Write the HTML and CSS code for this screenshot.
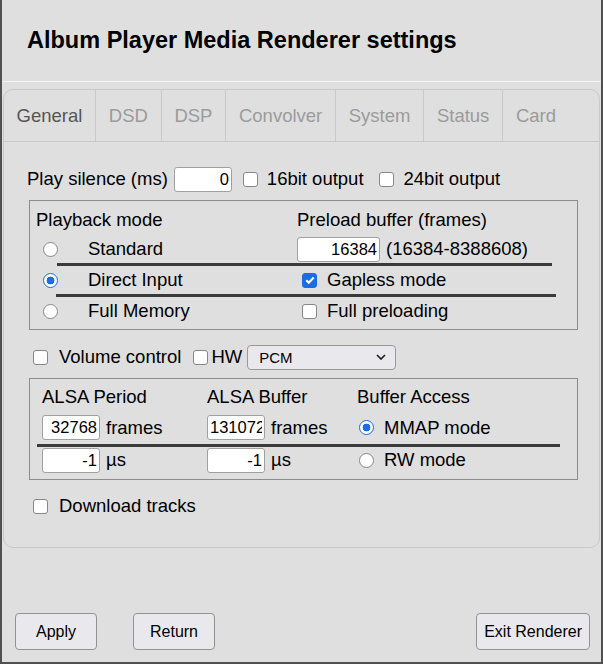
FILE: index.html
```html
<!DOCTYPE html>
<html lang="en">
<head>
    <meta charset="UTF-8">
    <meta name="viewport" content="width=device-width, initial-scale=1.0">
    <title>Album Player Media Renderer settings</title>
    <link rel="stylesheet" href="styles.css">
</head>
<body>

<div class="window">
    <header class="title-bar">
        <h1>Album Player Media Renderer settings</h1>
    </header>

    <div class="panel">
        <ul class="tabs">
            <li class="tab active">General</li>
            <li class="tab">DSD</li>
            <li class="tab">DSP</li>
            <li class="tab">Convolver</li>
            <li class="tab">System</li>
            <li class="tab">Status</li>
            <li class="tab">Card</li>
        </ul>

        <div class="tab-body">
            <div class="row silence-row">
                <span>Play silence (ms)</span>
                <input class="num silence" type="text" value="0">
                <label class="opt bit16"><input class="check" type="checkbox">16bit output</label>
                <label class="opt bit24"><input class="check" type="checkbox">24bit output</label>
            </div>

            <div class="box playback">
                <div class="cell span2">Playback mode</div>
                <div class="cell">Preload buffer (frames)</div>

                <div class="cell"><input class="radio" type="radio" name="mode"></div>
                <div class="cell">Standard</div>
                <div class="cell unit"><input class="num preload" type="text" value="16384"><span>(16384-8388608)</span></div>

                <div class="rule rule-a"></div>

                <div class="cell"><input class="radio" type="radio" name="mode" checked></div>
                <div class="cell">Direct Input</div>
                <label class="cell opt"><input class="check" type="checkbox" checked>Gapless mode</label>

                <div class="rule rule-b"></div>

                <div class="cell"><input class="radio" type="radio" name="mode"></div>
                <div class="cell">Full Memory</div>
                <label class="cell opt"><input class="check" type="checkbox">Full preloading</label>
            </div>

            <div class="row volume">
                <label class="opt"><input class="check" type="checkbox">Volume control</label>
                <label class="opt hw"><input class="check" type="checkbox">HW</label>
                <select class="select">
                    <option>PCM</option>
                    <option>Master</option>
                </select>
            </div>

            <div class="box alsa">
                <div class="cell">ALSA Period</div>
                <div class="cell">ALSA Buffer</div>
                <div class="cell">Buffer Access</div>

                <div class="cell unit"><input class="num" type="text" value="32768"><span>frames</span></div>
                <div class="cell unit"><input class="num" type="text" value="131072"><span>frames</span></div>
                <label class="cell opt access"><input class="radio" type="radio" name="access" checked>MMAP mode</label>

                <div class="rule rule-c"></div>

                <div class="cell unit"><input class="num" type="text" value="-1"><span>µs</span></div>
                <div class="cell unit"><input class="num" type="text" value="-1"><span>µs</span></div>
                <label class="cell opt access"><input class="radio" type="radio" name="access">RW mode</label>
            </div>

            <div class="row download">
                <label class="opt"><input class="check" type="checkbox">Download tracks</label>
            </div>
        </div>
    </div>

    <div class="actions">
        <button class="btn">Apply</button>
        <button class="btn btn-return">Return</button>
        <button class="btn btn-exit">Exit Renderer</button>
    </div>
</div>

</body>
</html>
```

FILE: styles.css
```css
body {
    margin: 0;
    font-family: "Liberation Sans", Arial, sans-serif;
    font-size: 18.5px;
    color: #000;
    background-color: #dfdfdf;
}
.window {
    height: 100vh;
    box-sizing: border-box;
    border: 2px solid #505050;
    border-top: 0;
    display: flex;
    flex-direction: column;
}

/* header */
.title-bar {
    height: 81px;
    display: flex;
    align-items: center;
    border-bottom: 1px solid #f2f2f2;
}
.title-bar h1 {
    margin: 0 0 0 25px;
    font-size: 23.5px;
    font-weight: bold;
}

/* tabbed panel */
.panel {
    margin: 7px 1px 0;
    border: 1px solid #c9c9c9;
    border-radius: 10px;
}
.tabs {
    display: flex;
    margin: 0;
    padding: 0;
    list-style: none;
    height: 51px;
    border-bottom: 1px solid #c9c9c9;
}
.tab {
    padding: 0 13px 0 12.5px;
    line-height: 51px;
    color: #9b9b9b;
    border-right: 1px solid #c9c9c9;
}
.tab.active {
    color: #555;
}
.tab:last-child {
    border-right: 0;
}
.tab-body {
    padding: 24px 21px 28px 23px;
}

/* form controls */
.num {
    box-sizing: border-box;
    width: 58px;
    height: 25px;
    padding: 0 2px;
    border: 1px solid #a0a0a0;
    border-radius: 3px;
    background-color: #fff;
    font: 16.5px "Liberation Sans", Arial, sans-serif;
    color: #000;
    text-align: right;
}
.check,
.radio {
    appearance: none;
    box-sizing: border-box;
    flex: none;
    width: 15px;
    height: 15px;
    margin: 0;
    border: 1.5px solid #878787;
    background-color: #fff;
}
.check {
    border-radius: 3px;
}
.check:checked {
    border-color: #1b6ee0;
    background: #1b6ee0 url("data:image/svg+xml,%3Csvg xmlns='http://www.w3.org/2000/svg' width='12' height='12' viewBox='0 0 12 12'%3E%3Cpath d='M2.3 6.3l2.5 2.5 4.9-5.3' fill='none' stroke='white' stroke-width='2'/%3E%3C/svg%3E") no-repeat center;
}
.radio {
    border-radius: 50%;
}
.radio:checked {
    border-color: #1b6ee0;
    background: radial-gradient(circle, #1b6ee0 0 3.6px, #fff 4.2px);
}

/* rows and groups */
.row {
    display: flex;
    align-items: center;
    height: 26px;
}
.opt {
    display: flex;
    align-items: center;
    gap: 10px;
}
.silence-row .silence {
    margin-left: 6px;
}
.bit16 {
    margin-left: 11px;
    gap: 9px;
}
.bit24 {
    margin-left: 15px;
}
.box {
    display: grid;
    align-items: center;
    margin: 8px 0 0 2px;
    border: 1px solid #8c8c8c;
}
.cell {
    display: flex;
    align-items: center;
    white-space: nowrap;
}
.span2 {
    grid-column: 1 / 3;
}
.unit {
    gap: 6px;
}
.rule {
    grid-column: 1 / -1;
    align-self: stretch;
    background-color: #3a3a3a;
}

.playback {
    padding: 4px 0 4px 6px;
    grid-template-columns: 52px 209px 1fr;
    grid-template-rows: 30px 28px 3px 28px 3px 28px;
}
.playback .radio {
    margin-left: 7px;
}
.playback .opt .check {
    margin-left: 5px;
}
.rule-a {
    margin: 0 25px 0 21px;
}
.rule-b {
    margin: 0 21px 0 20px;
}
.num.preload {
    width: 83px;
}

.volume {
    margin: 14px 0 0 2px;
}
.volume .opt:first-child .check,
.download .check {
    margin-left: 4px;
}
.volume .opt:first-child,
.download .opt {
    gap: 11px;
}
.hw {
    margin-left: 12px;
    gap: 3px;
}
.select {
    appearance: none;
    box-sizing: border-box;
    width: 149px;
    height: 25px;
    margin-left: 5px;
    padding: 0 0 0 11px;
    border: 1px solid #9a9a9a;
    border-radius: 4px;
    background: #e9e9ed url("data:image/svg+xml,%3Csvg xmlns='http://www.w3.org/2000/svg' width='10' height='6' viewBox='0 0 10 6'%3E%3Cpath d='M1 1l4 4 4-4' fill='none' stroke='%23222' stroke-width='1.7'/%3E%3C/svg%3E") no-repeat right 9px center;
    font: 15px "Liberation Sans", Arial, sans-serif;
    color: #000;
}

.alsa {
    margin-top: 8px;
    padding: 4px 0 6px 12px;
    grid-template-columns: 165px 150px 1fr;
    grid-template-rows: 28px 33px 3px 26px;
}
.access .radio {
    margin-left: 2px;
}
.rule-c {
    margin: 0 17px 0 -5px;
}

.download {
    margin: 13px 0 0 2px;
}

/* bottom buttons */
.actions {
    margin-top: auto;
    display: flex;
    padding: 0 11px 12px 13px;
}
.btn {
    box-sizing: border-box;
    height: 37px;
    min-width: 82px;
    padding: 0 7px;
    border: 1px solid #929292;
    border-radius: 4px;
    background-color: #e9e9ed;
    font: 16px "Liberation Sans", Arial, sans-serif;
    color: #000;
}
.btn-return {
    margin-left: 36px;
}
.btn-exit {
    margin-left: auto;
}
```
